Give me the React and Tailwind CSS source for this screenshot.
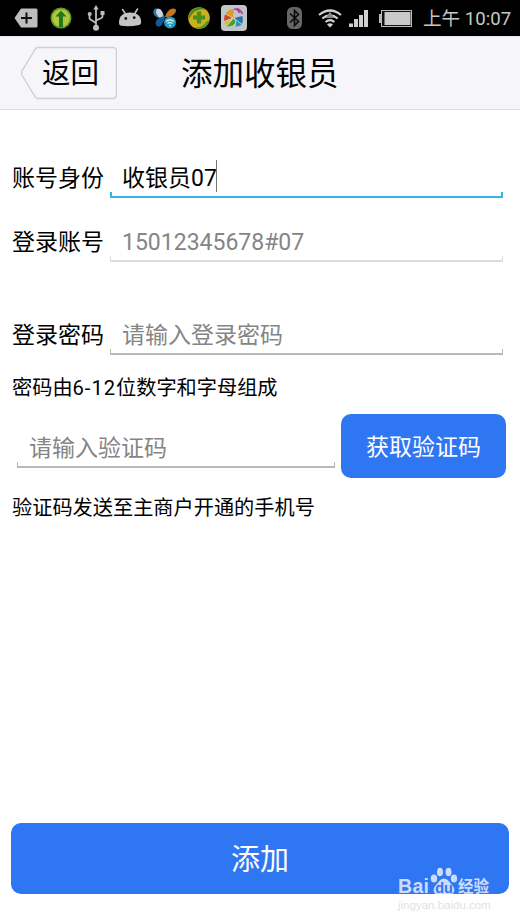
import clsx from 'clsx';

const TagIcon = () => (
  <svg width="24" height="20" viewBox="0 0 24 20">
    <path d="M7 .5h15a1.500 1.500 0 0 1 1.500 1.500v16a1.500 1.500 0 0 1-1.500 1.500H7L.5 10z" fill="#bdbdbd" />
    <path d="M12.500 4.500v11M7 10h11" stroke="#111" strokeWidth="2" fill="none" />
  </svg>
);

const UpdateIcon = () => (
  <svg width="22" height="22" viewBox="0 0 22 22">
    <circle cx="11" cy="11" r="10.500" fill="#5c9c2a" />
    <circle cx="11" cy="11" r="8.800" fill="#b5c63e" />
    <path d="M11 3.500l5.500 6H13V20H9V9.500H5.500z" fill="#207a17" />
  </svg>
);

const UsbIcon = () => (
  <svg width="18" height="26" viewBox="0 0 18 26" fill="none" stroke="#bdbdbd" strokeWidth="1.800">
    <path d="M9 3v19M9 18l-5.500-3.500a1.500 1.500 0 0 1-1-1.500V9.500M9 15.500l5.500-2.500q1-.5 1-2V8" />
    <path d="M9 0l2.700 4.500H6.300z" fill="#bdbdbd" stroke="none" />
    <circle cx="9" cy="22.800" r="3" fill="#bdbdbd" stroke="none" />
    <circle cx="2.700" cy="9" r="2" fill="#bdbdbd" stroke="none" />
    <path d="M13.500 6h4v4h-4z" fill="#bdbdbd" stroke="none" />
  </svg>
);

const AndroidIcon = () => (
  <svg width="24" height="20" viewBox="0 0 24 20">
    <path d="M4.500 1.500l3.500 5M19.500 1l-3 5" stroke="#c4c4c4" strokeWidth="1.500" strokeLinecap="round" />
    <path d="M1 15C1 8 5 4.500 12 4.500S23 8 23.200 14q0 2.500-2 3-10 2-18 .8Q1 17.500 1 15z" fill="#c4c4c4" />
    <circle cx="7.800" cy="10.500" r="1.400" fill="#111" />
    <circle cx="16.200" cy="9.700" r="1.400" fill="#111" />
  </svg>
);

const ButterflyIcon = () => (
  <svg width="26" height="24" viewBox="0 0 26 24">
    <path d="M13 12C8 14 0 10 1.500 5 3 0 10 1.500 13 12z" fill="#2f79a8" />
    <ellipse cx="7.500" cy="7" rx="3" ry="4.400" fill="#c9d4dc" transform="rotate(-25 7.500 7)" />
    <path d="M13 11C15 4 20 1 23.500 3c2 3-3 9-10.500 8z" fill="#c8741f" />
    <path d="M12.500 11C7 11 2 14 4 19c3 4 8 0 8.500-8z" fill="#145795" />
    <circle cx="18" cy="16.500" r="6" fill="#1f9fc4" />
    <path d="M14 15.500q4-3.600 8 0M15.500 17.500q2.500-2 5 0" stroke="#d2e6eb" strokeWidth="1.300" fill="none" />
    <circle cx="18" cy="19.600" r="1" fill="#d2e6eb" />
  </svg>
);

const GuardIcon = () => (
  <svg width="22" height="22" viewBox="0 0 22 22">
    <circle cx="11" cy="11" r="10.800" fill="#c9b01c" />
    <path d="M2 6A10.800 10.800 0 0 1 18 2.800Q11 1 6 5 3 8 1 12 .5 9 2 6z" fill="#448e25" />
    <path d="M21.500 13A10.800 10.800 0 0 1 6 20.500Q13 21 16.500 17q3-4 5-4z" fill="#59962a" />
    <path d="M11 4.500v12M5 10.500h12" stroke="#4a8f1b" strokeWidth="4.200" />
  </svg>
);

const AssistantIcon = () => (
  <svg width="26" height="26" viewBox="0 0 26 26">
    <rect width="26" height="26" rx="4" fill="#c3c4c8" />
    <path d="M12 13L4.500 9Q7 4 13 4z" fill="#df9c22" />
    <path d="M12 13L3.500 16.500Q2.500 12 4.500 9z" fill="#cb4725" />
    <path d="M12 13L5.500 21.500Q4 20 3.500 16.500z" fill="#dfbc27" />
    <path d="M13 13l2 4Q12 22 5.500 21.500z" fill="#43a32b" />
    <path d="M13 13l8 6.500Q18 22 14 21.500L15 17z" fill="#2c91bb" />
    <path d="M13 13l8.500-2Q22.500 15 21 19.500z" fill="#2375b3" />
    <path d="M13 4q4 0 5.500 4M15.500 3.500q4 1 6 5.500" stroke="#a83aa6" strokeWidth="1.600" fill="none" />
    <path d="M12 13L4.500 9M12 13l-8.500 3.500M12 13l-6.500 8.500M13 13l2 4-1 4.500M13 13l8 6.500" stroke="#d8d9dc" strokeWidth=".8" fill="none" />
  </svg>
);

const BluetoothIcon = () => (
  <svg width="15" height="22" viewBox="0 0 15 22">
    <rect width="15" height="22" rx="5.500" fill="#666" />
    <path d="M3 6.500l8.500 8L7.500 18.500v-15l4 4-8.500 8" stroke="#0a0a0a" strokeWidth="1.600" fill="none" />
  </svg>
);

const WifiIcon = () => (
  <svg width="24" height="19" viewBox="0 0 24 19" fill="none" stroke="#d0d0d0" strokeWidth="2.200">
    <path d="M1 6Q12-3 23 6M4.300 9.500q7.700-6.200 15.400 0M7.600 13q4.400-3.600 8.800 0" />
    <path d="M12 18.500l-3-3q3-2.300 6 0z" fill="#d0d0d0" stroke="none" />
    <path d="M12 2.500l4 6.500H8z" fill="#888" stroke="none" />
  </svg>
);

const SignalIcon = () => (
  <svg width="19" height="17" viewBox="0 0 19 17" fill="#d0d0d0">
    <path d="M0 13.500h4V17H0zM5 9h4v8H5zM10 5h4v12h-4zM15 0h4v17h-4z" />
  </svg>
);

const BatteryIcon = () => (
  <svg width="33" height="17" viewBox="0 0 33 17">
    <path d="M0 4h2v9H0z" fill="#bbb" />
    <rect x="2.500" y=".5" width="30" height="16" fill="#111" stroke="#bbb" />
    <rect x="5.500" y="2" width="26" height="13" fill="#cacaca" />
  </svg>
);

const StatusBar = () => (
  <div className="flex h-9 items-center bg-black pl-3.5">
    <div className="flex items-center">
      <TagIcon />
      <div className="ml-3"><UpdateIcon /></div>
      <div className="ml-[15px]"><UsbIcon /></div>
      <div className="ml-[13px]"><AndroidIcon /></div>
      <div className="ml-2.5"><ButterflyIcon /></div>
      <div className="ml-2.5"><GuardIcon /></div>
      <div className="ml-[11px]"><AssistantIcon /></div>
    </div>
    <div className="ml-10 flex items-center">
      <BluetoothIcon />
      <div className="ml-4"><WifiIcon /></div>
      <div className="ml-[7px]"><SignalIcon /></div>
      <div className="ml-[11px]"><BatteryIcon /></div>
    </div>
    <span className="ml-[11px] whitespace-nowrap pt-0.5 text-[18.600px] leading-[34px] text-[#c8c8c8]">上午 10:07</span>
  </div>
);

const Header = () => (
  <header className="flex h-[74px] items-center border-y border-t-[#e6e6ea] border-b-[#dfdfe4] bg-[#f5f5fa] pl-[21px]">
    <button className="relative h-[54px] w-24 text-left">
      <svg className="absolute inset-0" width="96" height="54" viewBox="0 0 96 54" fill="none">
        <path d="M17 1.500h75a3.500 3.500 0 0 1 3.500 3.500v44a3.500 3.500 0 0 1-3.500 3.500H17q-2 0-3-2L1.200 29.500q-1.200-2.500 0-5L14 3.500q1-2 3-2z" stroke="#cfcfd3" strokeWidth="1.400" />
      </svg>
      <span className="relative ml-[21px] block pt-0.5 text-[28.500px] leading-[52px]">返回</span>
    </button>
    <h1 className="ml-16 pt-1 text-[31.500px] leading-[68px]">添加收银员</h1>
  </header>
);

const lineColors = {
  active: 'border-[#33b5e5]',
  disabled: 'border-[#dcdcdc]',
  normal: 'border-[#b9b9b9]',
};

const Field = ({ variant = 'normal', className, children }) => (
  <div className={clsx('flex flex-col', className)}>
    <div className="flex h-8 items-center pl-3 pt-1.5 text-[23px] leading-8">{children}</div>
    <div className={clsx('h-1.5 border-x border-b-2', variant === 'active' && 'border-x-2', lineColors[variant])} />
  </div>
);

const Row = ({ label, className, children }) => (
  <div className={clsx('flex h-[38px]', className)}>
    <label className="w-[98px] pt-[3px] text-[23px] leading-8">{label}</label>
    {children}
  </div>
);

const Paw = () => (
  <svg width="28" height="28" viewBox="0 0 28 28" fill="#fff">
    <ellipse cx="4" cy="11.500" rx="3.200" ry="4" />
    <ellipse cx="10" cy="5" rx="3" ry="4.300" />
    <ellipse cx="18.500" cy="5" rx="3" ry="4.300" />
    <ellipse cx="24" cy="11.500" rx="3.200" ry="4" />
    <path d="M14 11.500c4 0 5.500 4 8.500 7s2.500 9-2.500 9H8c-5 0-5.500-6-2.500-9s4.500-7 8.500-7z" />
    <text x="14" y="26" textAnchor="middle" fontSize="14.500" fontWeight="700" fill="#2f76f2">du</text>
  </svg>
);

const Watermark = () => (
  <div className="pointer-events-none absolute left-[398px] top-[867px] w-[96px] font-['Liberation_Sans','Noto_Sans_CJK_SC',sans-serif]">
    <div className="flex h-7 items-end whitespace-nowrap text-white opacity-75">
      <span className="w-8 text-[19.500px] font-bold leading-[17px] tracking-[0.3px]">Bai</span>
      <Paw />
      <span className="text-[15.500px] font-bold leading-[16px]">经验</span>
    </div>
    <div className="mt-0.5 whitespace-nowrap text-[11.500px] leading-4 text-[#e2e2e2]">jingyan.baidu.com</div>
  </div>
);

export default function App() {
  return (
    <div className="relative flex h-[923px] w-[520px] flex-col overflow-hidden bg-white font-[Roboto,'Noto_Sans_CJK_SC',sans-serif] text-black" lang="zh-CN">
      <StatusBar />
      <Header />

      <main className="flex flex-1 flex-col px-3">
        <Row label="账号身份" className="mt-[50px]">
          <Field variant="active" className="w-[393px]">
            收银员07
            <span className="-ml-px -mt-1.5 h-8 w-px bg-[#777]" />
          </Field>
        </Row>
        <Row label="登录账号" className="mt-[26px]">
          <Field variant="disabled" className="w-[393px]">
            <span className="text-[#858585]">15012345678#07</span>
          </Field>
        </Row>
        <Row label="登录密码" className="mt-[55px]">
          <Field className="w-[393px]">
            <span className="text-[#858585]">请输入登录密码</span>
          </Field>
        </Row>
        <p className="mt-[19px] text-[20.200px] leading-7">
          密码由<span className="tracking-[0.95px]">6-12</span>位数字和字母组成
        </p>

        <div className="mt-3 flex">
          <Field className="ml-[5px] mt-4 w-[318px]">
            <span className="text-[#858585]">请输入验证码</span>
          </Field>
          <button className="ml-1.5 h-16 w-[165px] rounded-[10px] bg-[#2f76f2] pt-1 text-[23px] text-white">获取验证码</button>
        </div>
        <p className="mt-4 text-[20.200px] leading-7">验证码发送至主商户开通的手机号</p>

        <button className="-mx-px mb-[29px] mt-auto h-[71px] rounded-[10px] bg-[#2f76f2] pt-1 text-[29px] text-white">添加</button>
      </main>

      <Watermark />
    </div>
  );
}
